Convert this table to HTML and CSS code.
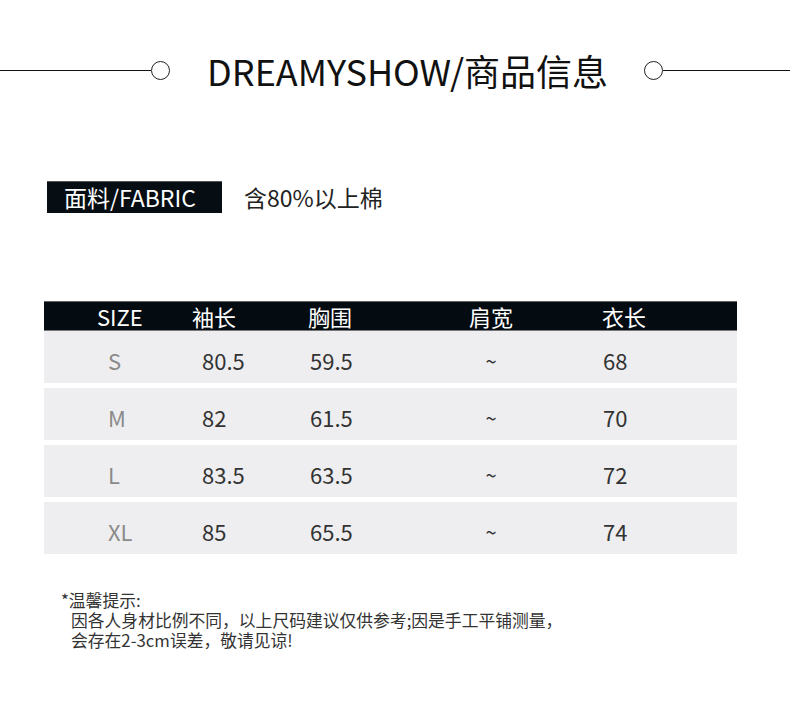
FILE: index.html
```html
<!DOCTYPE html>
<html lang="zh-CN">
<head>
<meta charset="utf-8">
<title>DREAMYSHOW 商品信息</title>
<link rel="stylesheet" href="styles.css">
</head>
<body>
<div class="page">
  <header class="title-row">
    <span class="line line-left"></span>
    <span class="dot"></span>
    <h1 class="title">DREAMYSHOW/商品信息</h1>
    <span class="dot dot-right"></span>
    <span class="line"></span>
  </header>

  <section class="fabric">
    <div class="fabric-label">面料/FABRIC</div>
    <div class="fabric-value">含80%以上棉</div>
  </section>

  <section class="size-table">
    <div class="row head">
      <div class="c c1">SIZE</div>
      <div class="c c2">袖长</div>
      <div class="c c3">胸围</div>
      <div class="c c4">肩宽</div>
      <div class="c c5">衣长</div>
    </div>
    <div class="row body">
      <div class="c c1 size">S</div>
      <div class="c c2">80.5</div>
      <div class="c c3">59.5</div>
      <div class="c c4 tilde">~</div>
      <div class="c c5">68</div>
    </div>
    <div class="row body">
      <div class="c c1 size">M</div>
      <div class="c c2">82</div>
      <div class="c c3">61.5</div>
      <div class="c c4 tilde">~</div>
      <div class="c c5">70</div>
    </div>
    <div class="row body">
      <div class="c c1 size">L</div>
      <div class="c c2">83.5</div>
      <div class="c c3">63.5</div>
      <div class="c c4 tilde">~</div>
      <div class="c c5">72</div>
    </div>
    <div class="row body">
      <div class="c c1 size">XL</div>
      <div class="c c2">85</div>
      <div class="c c3">65.5</div>
      <div class="c c4 tilde">~</div>
      <div class="c c5">74</div>
    </div>
  </section>

  <section class="note">
    <p class="note-title">*温馨提示:</p>
    <p class="note-line">因各人身材比例不同，以上尺码建议仅供参考;因是手工平铺测量，</p>
    <p class="note-line">会存在2-3cm误差，敬请见谅!</p>
  </section>
</div>
</body>
</html>
```

FILE: styles.css
```css
* { box-sizing: border-box; }
html, body { margin: 0; padding: 0; background: #fff; }
body {
  font-family: "Noto Sans CJK SC", "Noto Sans", sans-serif;
  color: #222;
}
.page { width: 790px; padding-top: 50px; }

.title-row {
  display: flex;
  align-items: center;
  height: 40px;
}
.line { flex: 1; height: 1px; background: #111; }
.line-left { flex: none; width: 151px; }
.dot {
  width: 19px; height: 19px;
  border: 1px solid #222;
  border-radius: 50%;
  flex: none;
  margin-right: 37px;
}
.dot-right { margin-right: 0; margin-left: 36px; }
.title {
  margin: 0;
  font-weight: 400;
  font-size: 36px;
  line-height: 40px;
  color: #111;
  white-space: nowrap;
}

.fabric {
  display: flex;
  align-items: center;
  margin: 90px 0 0 47px;
}
.fabric-label {
  width: 175px;
  height: 32px;
  background: #060d13;
  color: #fff;
  font-size: 23px;
  line-height: 31px;
  padding-left: 17px;
  border-top: 1px solid #555;
}
.fabric-value {
  margin-left: 22px;
  font-size: 23px;
  color: #222;
}

.size-table {
  margin: 87px 53px 0 44px;
  display: flex;
  flex-direction: column;
  gap: 5px;
}
.row {
  display: grid;
  grid-template-columns: 141px 115px 131px 120px 186px;
  align-items: center;
}
.head {
  height: 30px;
  background: #040b11;
  color: #fff;
  border-top: 1px solid #666;
  border-bottom: 1px solid #777;
  margin-bottom: -5px;
  font-size: 22px;
}
.head .c { line-height: 26px; }
.body {
  height: 52px;
  background: #eeeef0;
  color: #333;
  font-size: 22px;
}
.body .c { line-height: 28px; padding-top: 5px; }
.head .c1 { padding-left: 53px; }
.head .c2 { padding-left: 7px; }
.head .c3 { padding-left: 8px; }
.head .c4 { text-align: center; }
.head .c5 { padding-left: 51px; }
.body .c1 { padding-left: 64px; color: #8a8a8a; }
.body .c2 { padding-left: 17px; }
.body .c3 { padding-left: 10px; }
.body .c4 { text-align: center; font-size: 20px; padding-top: 8px; }
.body .c5 { padding-left: 52px; }

.note {
  margin: 36px 0 0 61px;
  font-size: 16.8px;
  line-height: 20px;
  color: #333;
}
.note p { margin: 0; height: 20px; }
.note-line { padding-left: 10px; }
```
